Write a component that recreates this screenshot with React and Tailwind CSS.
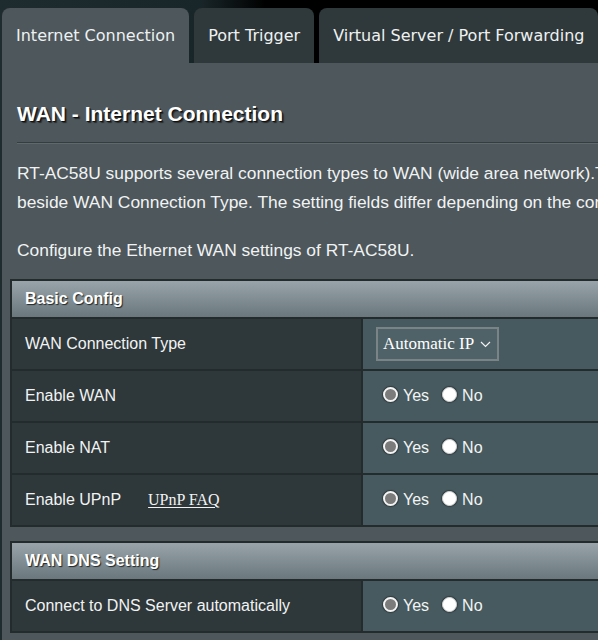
import React from "react";

const sans = { fontFamily: '"Liberation Sans", Arial, sans-serif' };
const serif = { fontFamily: '"Liberation Serif", "Times New Roman", serif' };

function Tab({ label, active }) {
  return (
    <div
      className={`flex items-center shrink-0 h-[55px] px-[14px] rounded-t-[8px] text-[16px] text-[#eef1f1] whitespace-nowrap ${
        active ? "bg-[#4d575c]" : "bg-[#2f393b]"
      }`}
      style={{ fontFamily: '"DejaVu Sans", Verdana, sans-serif' }}
    >
      {label}
    </div>
  );
}

function RadioPair() {
  return (
    <div className="flex items-center pl-[20px] text-[16px] text-[#f2f4f4]" style={sans}>
      <span className="w-[15px] h-[15px] rounded-full border-2 border-[#f4f4f4] bg-[#7b7b7b] shadow-[0_0_1px_1px_rgba(0,0,0,0.35)] -mt-[3px]" />
      <span className="ml-[5px]">Yes</span>
      <span className="ml-[13px] w-[15px] h-[15px] rounded-full bg-white border border-[#d6d6d6] shadow-[0_0_1px_1px_rgba(0,0,0,0.3)] -mt-[3px]" />
      <span className="ml-[5px]">No</span>
    </div>
  );
}

function Row({ label, extra, children }) {
  return (
    <div>
      <div className="flex h-[50px]">
        <div
          className="w-[351px] shrink-0 flex items-center pl-[13px] bg-[#2e3739] border-r-2 border-[#232b2d] text-[16px] text-[#f1f3f3]"
          style={sans}
        >
          {label}
          {extra}
        </div>
        <div className="flex-1 flex items-center bg-[#475a5f]">{children}</div>
      </div>
    </div>
  );
}

function Section({ title, children, className = "" }) {
  return (
    <div className={`ml-[8px] border-2 border-[#232b2d] ${className}`}>
      <div
        className="h-[38px] flex items-center pl-[13px] border-b-2 border-[#232b2d] bg-[linear-gradient(to_bottom,#98a4a9,#6a777c)] text-[16px] font-bold text-white [text-shadow:1px_1px_1px_#1f2628]"
        style={sans}
      >
        {title}
      </div>
      <div className="flex flex-col divide-y-2 divide-[#232b2d]">{children}</div>
    </div>
  );
}

export default function App() {
  return (
    <div className="w-[598px] h-[640px] overflow-hidden bg-[linear-gradient(to_right,#1f2c2f_0px,#192629_200px,#000_265px)]">
      <div className="w-[800px] pl-[2px] pt-[8px]">
        <div className="flex gap-[5px]">
          <Tab label="Internet Connection" active />
          <Tab label="Port Trigger" />
          <Tab label="Virtual Server / Port Forwarding" />
        </div>

        <div className="bg-[#4d575c] pt-[37px] pb-[40px]">
          <h1
            className="pl-[15px] text-[21px] leading-[28px] font-bold text-white [text-shadow:1px_1px_0_#111,2px_2px_1px_rgba(0,0,0,0.5)]"
            style={sans}
          >
            WAN - Internet Connection
          </h1>
          <div className="ml-[15px] mt-[14px]">
            <div className="h-px bg-[#343d40]" />
            <div className="h-px bg-[#5f696d]" />
          </div>

          <div className="pl-[15px] text-[17.4px] leading-[29px] text-[#f1f3f3]" style={sans}>
            <p className="mt-[15px] whitespace-nowrap">
              RT-AC58U supports several connection types to WAN (wide area network).These types are selected from the dropdown menu
              <br />
              beside WAN Connection Type. The setting fields differ depending on the connection type you selected.
            </p>
            <p className="mt-[19px] whitespace-nowrap">Configure the Ethernet WAN settings of RT-AC58U.</p>
          </div>

          <Section title="Basic Config" className="mt-[14px]">
            <Row label="WAN Connection Type">
              <div
                className="ml-[13px] h-[34px] w-[123px] flex items-center pl-[5px] border-2 border-[#7a8386] bg-[#4f6268] text-[17px] text-white"
                style={serif}
              >
                Automatic IP
                <svg className="ml-[6px] mt-[1px]" width="11" height="7" viewBox="0 0 11 7" fill="none">
                  <path d="M1 1l4.5 4.5L10 1" stroke="#f2f2f2" strokeWidth="1.2" />
                </svg>
              </div>
            </Row>
            <Row label="Enable WAN">
              <RadioPair />
            </Row>
            <Row label="Enable NAT">
              <RadioPair />
            </Row>
            <Row
              label="Enable UPnP"
              extra={
                <span className="ml-[27px] underline underline-offset-2 text-[16px] text-[#f1f3f3]" style={serif}>
                  UPnP FAQ
                </span>
              }
            >
              <RadioPair />
            </Row>
          </Section>

          <Section title="WAN DNS Setting" className="mt-[14px]">
            <Row label="Connect to DNS Server automatically">
              <RadioPair />
            </Row>
          </Section>
        </div>
      </div>
    </div>
  );
}
